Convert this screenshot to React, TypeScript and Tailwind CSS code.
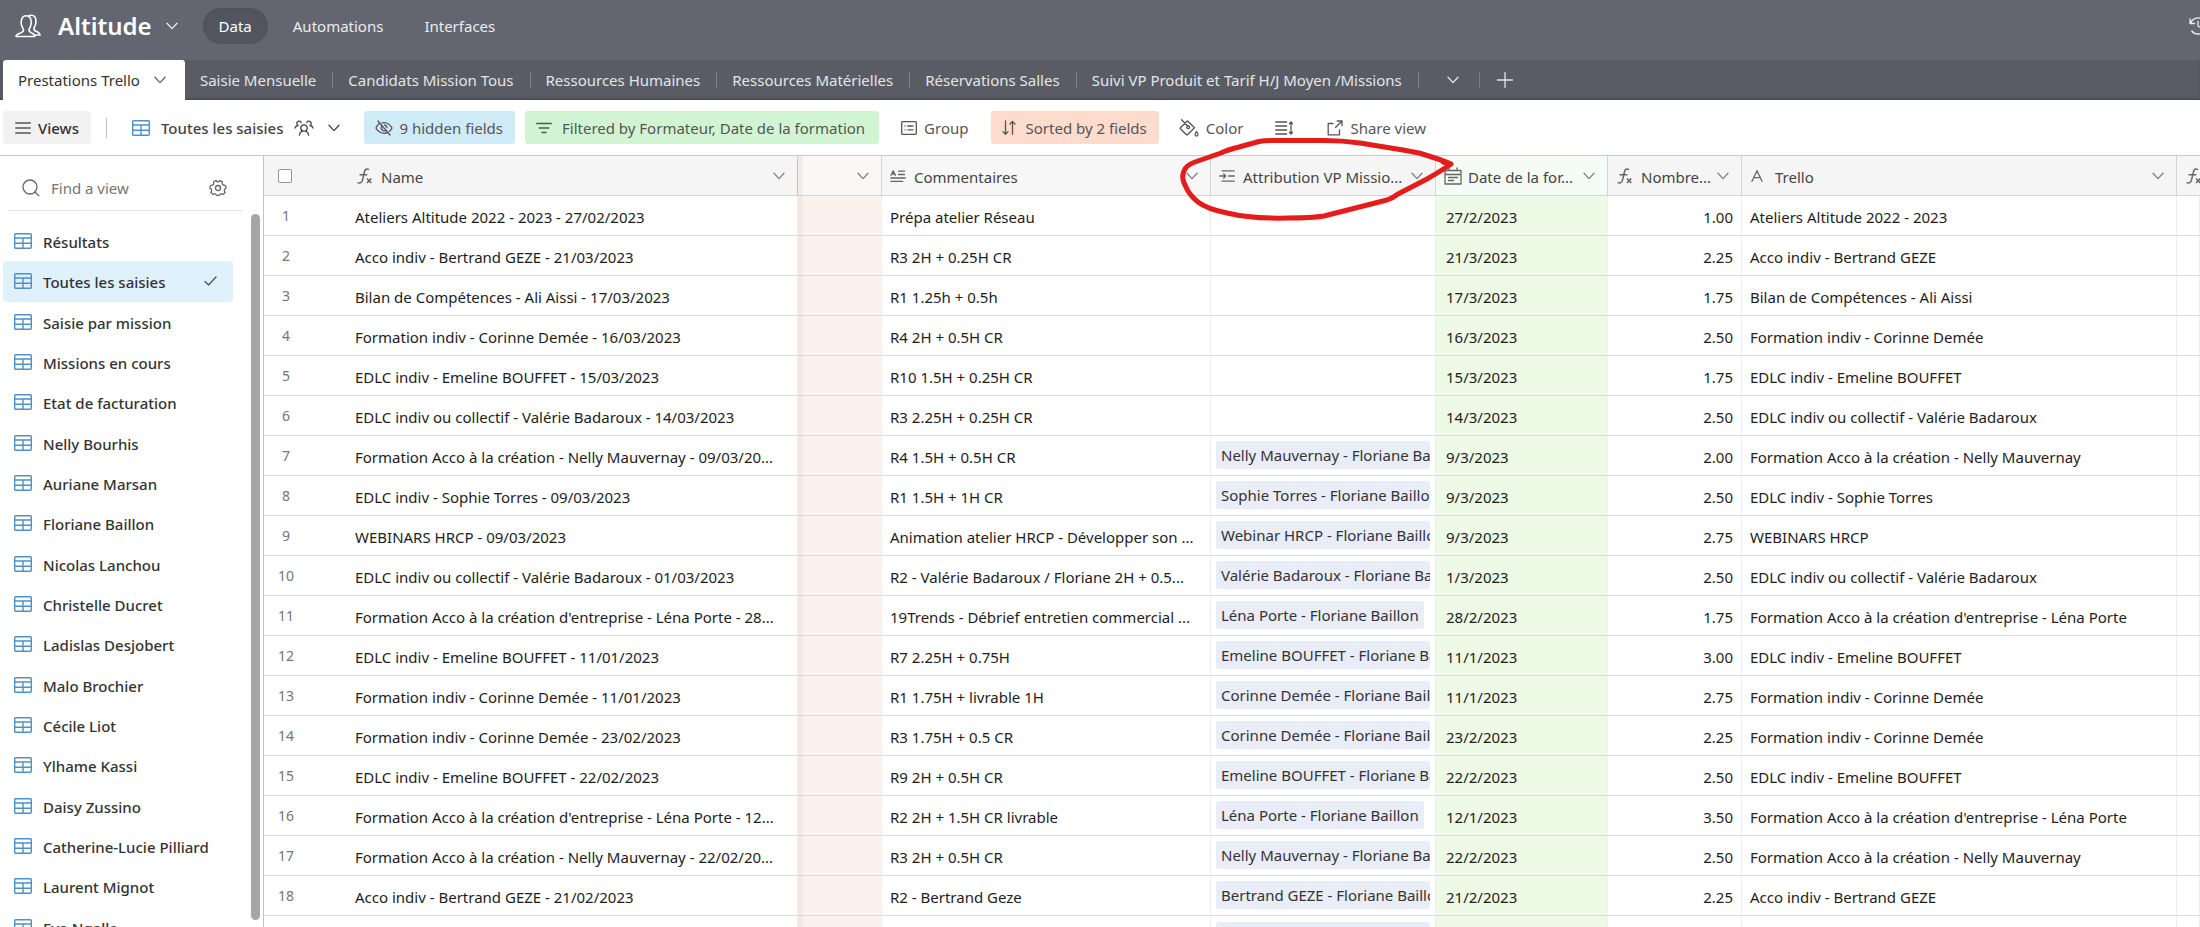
import type { ReactNode } from "react";

type IconProps = { className?: string };

function Svg({ className, children, box = "0 0 20 20" }: { className?: string; children: ReactNode; box?: string }) {
  return (
    <svg
      viewBox={box}
      className={className ?? "size-5"}
      fill="none"
      stroke="currentColor"
      strokeWidth="1.3"
      strokeLinecap="round"
      strokeLinejoin="round"
      aria-hidden="true"
    >
      {children}
    </svg>
  );
}

function Chevron({ className = "w-3 h-2" }: IconProps) {
  return (
    <Svg className={className + " shrink-0"} box="0 0 12 8">
      <path d="M1 1.200 6 6.600 11 1.200" />
    </Svg>
  );
}

function GridIcon({ className = "" }: IconProps) {
  return (
    <svg viewBox="0 0 18 16" className={"w-[18px] h-4 shrink-0 text-[#4f90c6] " + className} fill="none" stroke="currentColor" strokeWidth="1.4" aria-hidden="true">
      <rect x=".7" y=".7" width="16.6" height="14.6" rx="1" />
      <path d="M.7 5h16.6M.7 10.200h16.6M9 5v10.300" />
    </svg>
  );
}

function UsersIcon() {
  return (
    <svg viewBox="0 0 26 24" className="w-[26px] h-6 shrink-0 text-white" fill="none" stroke="currentColor" strokeWidth="1.6" strokeLinejoin="round" aria-hidden="true">
      <path d="M1 22.500h18.800c0-2.200-1.300-2.900-3.100-3.600-1.900-.7-3-1.300-2.700-3.200.3-1.500 2.300-3 2.300-7.100 0-4.600-2-6.900-5.100-6.900S6.100 4 6.100 8.600c0 4.100 2 5.600 2.300 7.100.3 1.900-.8 2.500-2.700 3.200C3.600 19.600 1.300 20.300 1 22.500Z" />
      <path d="M13.400 2.200c.9-.7 2-1 3-1 3 0 4.600 2.200 4.600 6.600 0 3.900-1.900 5.200-2.100 6.700-.2 1.800.9 2.400 2.700 3.100 1.700.6 3.100 1.400 3.400 3.400h-5.600" />
    </svg>
  );
}

function PeopleIcon() {
  return (
    <Svg className="w-5 h-4 shrink-0" box="0 0 20 16">
      <circle cx="10" cy="8" r="3.200" />
      <path d="M5.300 15.200c.4-2 1.400-3.300 2.900-4M14.700 15.200c-.4-2-1.400-3.300-2.900-4M1 8c.4-1.500 1.500-2.300 3-2.500M7.200 2.600A2.300 2.300 0 1 0 4 5.500M19 8c-.4-1.500-1.500-2.300-3-2.500M12.800 2.600A2.300 2.300 0 1 1 16 5.500" />
    </Svg>
  );
}

function EyeOffIcon() {
  return (
    <Svg className="w-[18px] h-4 shrink-0" box="0 0 18 16">
      <path d="M3 1l12 14M4.600 3.300C2.200 4.900 1 8 1 8s2.300 5.300 8 5.300c1.500 0 2.800-.3 3.900-.9M7.200 2.800C7.800 2.700 8.400 2.700 9 2.700c5.700 0 8 5.300 8 5.300s-.8 1.900-2.700 3.400M7 5.800a3 3 0 0 0 4 4.400M9.600 5c1.300.3 2.200 1.200 2.400 2.600" />
    </Svg>
  );
}

function FilterIcon() {
  return (
    <Svg className="w-4 h-3 shrink-0" box="0 0 16 12">
      <path d="M.7 1.500h14.600M3.200 6h9.600M6 10.500h4" />
    </Svg>
  );
}

function GroupIcon() {
  return (
    <Svg className="w-4 h-[14px] shrink-0" box="0 0 16 14">
      <rect x=".7" y=".7" width="14.600" height="12.600" rx=".8" />
      <path d="M4 5h.2M6.800 5H12M4 8.800h.2M6.800 8.800H12" />
    </Svg>
  );
}

function SortIcon() {
  return (
    <Svg className="w-[14px] h-4 shrink-0" box="0 0 14 16">
      <path d="M3.500 1v13M1 11.600 3.500 14.200 6 11.600M10.500 14.200V1.400M8 4l2.500-2.600L13 4" />
    </Svg>
  );
}

function ColorIcon() {
  return (
    <Svg className="w-5 h-[18px] shrink-0" box="0 0 20 18">
      <path d="M2.500.8 9 7.300M7.900 2.200 1.400 8.700a.8.8 0 0 0 0 1.100l6 6a.8.8 0 0 0 1.100 0l7-7L8.900 2.200a.7.7 0 0 0-1 0Z" />
      <circle cx="9.200" cy="8.300" r="1.400" />
      <path d="M17.500 12.500c1 1.500 1.500 2.200 1.500 3a1.500 1.500 0 0 1-3 0c0-.8.500-1.500 1.500-3Z" />
    </Svg>
  );
}

function HeightIcon() {
  return (
    <Svg className="w-[18px] h-[14px] shrink-0" box="0 0 18 14">
      <path d="M.7 1h11M.7 5h11M.7 9h11M.7 13h11M16 1.200v11.600M14.500 2.700 16 1l1.500 1.700M14.500 11.300 16 13l1.500-1.700" />
    </Svg>
  );
}

function ShareIcon() {
  return (
    <Svg className="size-4 shrink-0" box="0 0 16 16">
      <path d="M6 3.500H1.200v11.300h11.300V10M10.200 1h4.800v4.800M15 1 8.500 7.500" />
    </Svg>
  );
}

function GearIcon() {
  return (
    <Svg className="size-[18px] shrink-0" box="0 0 18 18">
      <circle cx="9" cy="9" r="2.500" />
      <path d="M6.900 1.500Q9 4.300 11.100 1.500l2.300 1.300Q12.400 6 15.900 6.300q1.600 1.300.9 3-2.700 1.700-.6 4.100l-2.300 2q-2.300-1.500-3.400.9H7.500q-1.200-2.400-3.400-.9l-2.300-2q2-2.400-.6-4.100-.7-1.700.9-3Q5.600 6 4.600 2.800Z" />
    </Svg>
  );
}

function FormulaIcon() {
  return (
    <svg viewBox="0 0 15 16" className="w-[15px] h-4 shrink-0" fill="none" stroke="currentColor" strokeWidth="1.5" aria-hidden="true">
      <path d="M12 1.700C9.800.4 8.100 1 7.500 3.600L5.500 12.200C4.900 14.600 3.200 15.400.5 14.600M2.500 6.800h7.800M10 10.500l4.300 4.600M14.300 10.500 10 15.100" />
    </svg>
  );
}

function LongTextIcon() {
  return (
    <Svg className="w-4 h-3 shrink-0" box="0 0 16 12">
      <path d="M1 5.300 3.200.8l2.200 4.500M1.700 4h3M8.500 1.200h6M8.500 4.500h6M.8 8h14.400M.8 11.300h12" />
    </Svg>
  );
}

function LookupIcon() {
  return (
    <Svg className="w-4 h-3 shrink-0" box="0 0 16 12">
      <path d="M3 .8h12.300M9.500 6h5.800M3 11.200h12.300M.7 6h6M4.700 4l2 2-2 2" />
    </Svg>
  );
}

function DateIcon() {
  return (
    <Svg className="w-[18px] h-[18px] shrink-0" box="0 0 18 18">
      <path d="M1 3.500h16v13.500H1ZM1 7.500h16M5 .9v2.600M13 .9v2.600M4.500 10.500h9M4.500 13.500h5" />
    </Svg>
  );
}

function TextIcon() {
  return (
    <Svg className="size-3 shrink-0" box="0 0 12 12">
      <path d="M1 11.300 6 .7l5 10.600M2.700 7.600h6.600" />
    </Svg>
  );
}

const tables = [
  "Saisie Mensuelle",
  "Candidats Mission Tous",
  "Ressources Humaines",
  "Ressources Matérielles",
  "Réservations Salles",
  "Suivi VP Produit et Tarif H/J Moyen /Missions",
];

const views = [
  "Résultats",
  "Toutes les saisies",
  "Saisie par mission",
  "Missions en cours",
  "Etat de facturation",
  "Nelly Bourhis",
  "Auriane Marsan",
  "Floriane Baillon",
  "Nicolas Lanchou",
  "Christelle Ducret",
  "Ladislas Desjobert",
  "Malo Brochier",
  "Cécile Liot",
  "Ylhame Kassi",
  "Daisy Zussino",
  "Catherine-Lucie Pilliard",
  "Laurent Mignot",
  "Eva Ngalle",
];

// name, comment, assignment, date, hours, trello card
const rows = [
  ["Ateliers Altitude 2022 - 2023 - 27/02/2023", "Prépa atelier Réseau", "", "27/2/2023", "1.00", "Ateliers Altitude 2022 - 2023"],
  ["Acco indiv - Bertrand GEZE - 21/03/2023", "R3 2H + 0.25H CR", "", "21/3/2023", "2.25", "Acco indiv - Bertrand GEZE"],
  ["Bilan de Compétences - Ali Aissi - 17/03/2023", "R1 1.25h + 0.5h", "", "17/3/2023", "1.75", "Bilan de Compétences - Ali Aissi"],
  ["Formation indiv - Corinne Demée - 16/03/2023", "R4 2H + 0.5H CR", "", "16/3/2023", "2.50", "Formation indiv - Corinne Demée"],
  ["EDLC indiv - Emeline BOUFFET - 15/03/2023", "R10 1.5H + 0.25H CR", "", "15/3/2023", "1.75", "EDLC indiv - Emeline BOUFFET"],
  ["EDLC indiv ou collectif - Valérie Badaroux - 14/03/2023", "R3 2.25H + 0.25H CR", "", "14/3/2023", "2.50", "EDLC indiv ou collectif - Valérie Badaroux"],
  ["Formation Acco à la création - Nelly Mauvernay - 09/03/20...", "R4 1.5H + 0.5H CR", "Nelly Mauvernay - Floriane Baillon", "9/3/2023", "2.00", "Formation Acco à la création - Nelly Mauvernay"],
  ["EDLC indiv - Sophie Torres - 09/03/2023", "R1 1.5H + 1H CR", "Sophie Torres - Floriane Baillon", "9/3/2023", "2.50", "EDLC indiv - Sophie Torres"],
  ["WEBINARS HRCP - 09/03/2023", "Animation atelier HRCP - Développer son ...", "Webinar HRCP - Floriane Baillon", "9/3/2023", "2.75", "WEBINARS HRCP"],
  ["EDLC indiv ou collectif - Valérie Badaroux - 01/03/2023", "R2 - Valérie Badaroux / Floriane 2H + 0.5...", "Valérie Badaroux - Floriane Baillon", "1/3/2023", "2.50", "EDLC indiv ou collectif - Valérie Badaroux"],
  ["Formation Acco à la création d'entreprise - Léna Porte - 28...", "19Trends - Débrief entretien commercial ...", "Léna Porte - Floriane Baillon", "28/2/2023", "1.75", "Formation Acco à la création d'entreprise - Léna Porte"],
  ["EDLC indiv - Emeline BOUFFET - 11/01/2023", "R7 2.25H + 0.75H", "Emeline BOUFFET - Floriane Baillon", "11/1/2023", "3.00", "EDLC indiv - Emeline BOUFFET"],
  ["Formation indiv - Corinne Demée - 11/01/2023", "R1 1.75H + livrable 1H", "Corinne Demée - Floriane Baillon", "11/1/2023", "2.75", "Formation indiv - Corinne Demée"],
  ["Formation indiv - Corinne Demée - 23/02/2023", "R3 1.75H + 0.5 CR", "Corinne Demée - Floriane Baillon", "23/2/2023", "2.25", "Formation indiv - Corinne Demée"],
  ["EDLC indiv - Emeline BOUFFET - 22/02/2023", "R9 2H + 0.5H CR", "Emeline BOUFFET - Floriane Baillon", "22/2/2023", "2.50", "EDLC indiv - Emeline BOUFFET"],
  ["Formation Acco à la création d'entreprise - Léna Porte - 12...", "R2 2H + 1.5H CR livrable", "Léna Porte - Floriane Baillon", "12/1/2023", "3.50", "Formation Acco à la création d'entreprise - Léna Porte"],
  ["Formation Acco à la création - Nelly Mauvernay - 22/02/20...", "R3 2H + 0.5H CR", "Nelly Mauvernay - Floriane Baillon", "22/2/2023", "2.50", "Formation Acco à la création - Nelly Mauvernay"],
  ["Acco indiv - Bertrand GEZE - 21/02/2023", "R2 - Bertrand Geze", "Bertrand GEZE - Floriane Baillon", "21/2/2023", "2.25", "Acco indiv - Bertrand GEZE"],
];

function TopBar() {
  return (
    <header className="flex h-[60px] items-start bg-[#636670] text-[#ececee]">
      <div className="flex h-[52px] flex-1 items-center pl-[15px]">
        <UsersIcon />
        <button className="ml-[17px] flex items-center gap-[14px]">
          <h1 className="text-[24px] leading-8 font-semibold text-white">Altitude</h1>
          <Chevron />
        </button>
        <nav className="ml-[25px] flex items-center gap-[9px] text-[15px] leading-5">
          <button className="h-9 rounded-full bg-[#525560] px-4 text-white shadow-inner">Data</button>
          <button className="h-9 px-4">Automations</button>
          <button className="h-9 px-4">Interfaces</button>
        </nav>
      </div>
      <button aria-label="History" className="mt-4 -mr-2 shrink-0">
        <Svg className="size-5">
          <path d="M2 3v4.500h4.500M2.500 7.300A8 8 0 1 1 3.800 15M10 5.500V10l3 2" />
        </Svg>
      </button>
    </header>
  );
}

function TableTabs() {
  return (
    <nav className="flex h-10 items-stretch bg-[#595c65] pl-[3px] text-[15px] leading-5 whitespace-nowrap text-[#e4e5e7] shadow-[inset_0_-2px_3px_-1px_#43454d]">
      <button className="flex items-center gap-[14px] rounded-t-[3px] bg-white pr-[19px] pl-[15px] text-[#333333]">
        Prestations Trello
        <Chevron className="w-3 h-2 text-[#666666]" />
      </button>
      {tables.map((name) => (
        <div key={name} className="flex items-center">
          <button className="h-full pr-4 pl-[15px]">{name}</button>
          <span className="h-4 w-px bg-[#7b7e86]" />
        </div>
      ))}
      <button aria-label="All tables" className="pr-5 pl-7">
        <Chevron />
      </button>
      <span className="h-4 w-px self-center bg-[#7b7e86]" />
      <button aria-label="Add table" className="px-4">
        <Svg className="size-[18px]" box="0 0 18 18">
          <path d="M9 1.500v15M1.500 9h15" />
        </Svg>
      </button>
    </nav>
  );
}

function Toolbar() {
  return (
    <div className="flex h-[56px] items-center border-b border-[#c6c9cb] pl-[3px] text-[15px] leading-5 whitespace-nowrap text-[#555555]">
      <button className="flex h-[33px] items-center gap-[7px] rounded-[3px] bg-[#f2f2f2] px-3 font-medium text-[#333333]">
        <Svg className="w-4 h-3 text-[#555555]" box="0 0 16 12">
          <path d="M.7 1h14.600M.7 6h14.600M.7 11h14.600" />
        </Svg>
        Views
      </button>
      <span className="ml-[15px] h-5 w-px bg-[#bfbfbf]" />
      <button className="ml-[25px] flex items-center font-medium text-[#444444]">
        <GridIcon />
        <span className="mr-[10px] ml-[11px]">Toutes les saisies</span>
        <PeopleIcon />
        <Chevron className="w-3 h-2 ml-[14px]" />
      </button>
      <div className="ml-6 flex items-center gap-[10px]">
        <button className="flex h-[33px] items-center gap-[7px] rounded-[3px] bg-[#d0ebf8] pr-3 pl-[11px]">
          <EyeOffIcon />9 hidden fields
        </button>
        <button className="flex h-[33px] items-center gap-[10px] rounded-[3px] bg-[#d1f5d3] pr-[14px] pl-[11px]">
          <FilterIcon />
          Filtered by Formateur, Date de la formation
        </button>
        <button className="flex h-[33px] items-center gap-[7px] pr-3 pl-3">
          <GroupIcon />
          Group
        </button>
        <button className="flex h-[33px] items-center gap-[10px] rounded-[3px] bg-[#fddbcd] pr-3 pl-[11px]">
          <SortIcon />
          Sorted by 2 fields
        </button>
        <button className="flex h-[33px] items-center gap-[7px] pr-3 pl-[10px]">
          <ColorIcon />
          Color
        </button>
        <button aria-label="Row height" className="flex h-[33px] items-center pr-3 pl-[10px]">
          <HeightIcon />
        </button>
        <button className="flex h-[33px] items-center gap-[7px] px-3">
          <ShareIcon />
          Share view
        </button>
      </div>
    </div>
  );
}

function Sidebar() {
  return (
    <aside className="flex w-[263px] shrink-0 text-[#333333]">
      <div className="min-w-0 flex-1">
        <div className="mr-2 ml-2 flex h-[55px] items-center border-b border-[#e2e2e2] pt-[10px] pr-4 pl-[14px] text-[#666666]">
          <Svg className="size-[18px] shrink-0" box="0 0 18 18">
            <circle cx="8" cy="8" r="7" />
            <path d="m13 13 3.800 3.800" />
          </Svg>
          <input
            aria-label="Find a view"
            placeholder="Find a view"
            className="mr-2 ml-[11px] min-w-0 flex-1 text-[15px] leading-5 outline-none placeholder:text-[#757575]"
          />
          <button aria-label="View settings">
            <GearIcon />
          </button>
        </div>
        <ul className="mt-[10px] mr-[18px] ml-[3px] grid h-[726px] auto-rows-fr">
          {views.map((view) => {
            const active = view === "Toutes les saisies";
            return (
              <li key={view}>
                <button
                  className={
                    "flex h-full w-full items-center rounded-[3px] pr-4 pl-[11px] text-[15px] leading-5 font-medium " +
                    (active ? "bg-[#dff1fb]" : "")
                  }
                >
                  <GridIcon />
                  <span className="ml-[11px] flex-1 pt-0.5 text-left whitespace-nowrap">{view}</span>
                  {active && (
                    <Svg className="w-[13px] h-[10px] text-[#555555]" box="0 0 13 10">
                      <path d="m1 5.500 3.500 3.500L12 1" />
                    </Svg>
                  )}
                </button>
              </li>
            );
          })}
        </ul>
      </div>
      <div className="mt-[58px] mr-[3px] h-[706px] w-[9px] rounded-full bg-[#a6a6a6]" />
    </aside>
  );
}

function FieldHead({ icon, label, className = "" }: { icon?: ReactNode; label?: string; className?: string }) {
  return (
    <th className={"h-[40px] border-r border-b border-[#d3d6d8] px-[9px] font-normal " + className}>
      <div className="flex items-center text-[#666666]">
        <span className="flex w-6 shrink-0 items-center">{icon}</span>
        <span className="flex-1 pt-0.5 text-left whitespace-nowrap text-[#444444]">{label}</span>
        <Chevron className="w-3 h-2 text-[#808080]" />
      </div>
    </th>
  );
}

function Cell({ children, className = "" }: { children?: ReactNode; className?: string }) {
  return (
    <td className={"h-[40px] truncate border-b border-b-[#dcdcdc] border-r border-r-[#eeeeee] px-2 pt-0.5 " + className}>{children}</td>
  );
}

function Records() {
  return (
    <table className="w-full table-fixed border-separate border-spacing-0 text-[15px] leading-5 text-[#1d1d1d]">
      <colgroup>
        <col className="w-[82px]" />
        <col className="w-[452px]" />
        <col className="w-[84px]" />
        <col className="w-[329px]" />
        <col className="w-[225px]" />
        <col className="w-[172px]" />
        <col className="w-[134px]" />
        <col className="w-[435px]" />
        <col />
      </colgroup>
      <thead>
        <tr className="bg-[#f5f5f5]">
          <th className="border-b border-[#d3d6d8]">
            <input
              type="checkbox"
              aria-label="Select all rows"
              className="ml-[14px] block size-[14px] appearance-none rounded-[2px] border border-[#8f959b] bg-white"
            />
          </th>
          <FieldHead icon={<FormulaIcon />} label="Name" className="border-r-[#c4c4c4] pr-3 pl-[11px]" />
          <FieldHead className="bg-[#fbf7f6] pr-3 shadow-[inset_5px_0_0_#f1ecea]" />
          <FieldHead icon={<LongTextIcon />} label="Commentaires" className="bg-[#f7f7f7] pr-3 pl-2" />
          <FieldHead icon={<LookupIcon />} label="Attribution VP Missio..." className="pr-3 pl-2" />
          <FieldHead icon={<DateIcon />} label="Date de la for..." className="bg-[#f5fbf5] pr-3 pl-2" />
          <FieldHead icon={<FormulaIcon />} label="Nombre..." className="pr-3" />
          <FieldHead icon={<TextIcon />} label="Trello" className="pr-3" />
          <th className="overflow-hidden border-b border-[#d3d6d8] pl-[9px] text-[#666666]">
            <FormulaIcon />
          </th>
        </tr>
      </thead>
      <tbody>
        {rows.map(([name, comment, owner, date, hours, trello], i) => (
          <tr key={i}>
            <td className="border-b border-[#dcdcdc] pr-[38px] text-center text-[14px] text-[#757575]">{i + 1}</td>
            <Cell className="border-r-[#c4c4c4] pl-[9px]">{name}</Cell>
            <Cell className="bg-[#fcf2ed] shadow-[inset_5px_0_0_#f3e8e4]" />
            <Cell>{comment}</Cell>
            <td className="border-r border-b border-r-[#eeeeee] border-b-[#dcdcdc] pr-[5px] pl-[5px]">
              {owner && (
                <div className="mb-px w-fit max-w-full overflow-hidden rounded-[3px] bg-[#e9edf8] px-[5px] leading-7 whitespace-nowrap text-[#333333]">
                  {owner}
                </div>
              )}
            </td>
            <Cell className="bg-[#edfae5] pl-[10px]">{date}</Cell>
            <Cell className="text-right">{hours}</Cell>
            <Cell>{trello}</Cell>
            <Cell />
          </tr>
        ))}
        <tr>
          <td />
          <Cell className="border-r-[#c4c4c4]" />
          <Cell className="bg-[#fcf2ed] shadow-[inset_5px_0_0_#f3e8e4]" />
          <Cell />
          <td className="border-r border-[#eeeeee] px-[5px]">
            <div className="mb-px h-7 rounded-[3px] bg-[#e9edf8]" />
          </td>
          <Cell className="bg-[#edfae5]" />
          <Cell />
          <Cell />
          <Cell />
        </tr>
      </tbody>
    </table>
  );
}

// Hand-drawn loop around the "Attribution VP Missions" field
function RedLoop() {
  return (
    <svg
      viewBox="0 0 280 90"
      className="pointer-events-none absolute top-[135px] left-[1177px] h-[90px] w-[280px]"
      fill="none"
      stroke="#e61c1c"
      strokeWidth="5"
      strokeLinecap="round"
      strokeLinejoin="round"
      aria-hidden="true"
    >
      <path d="M272 28C262 24 252 21 242 18L226 15 183 8Q165 5.500 147 5.500H98Q88 5.500 82 6.500L62 12Q50 15 44 18L18 27Q9 30 7 36 4 43 8 50 12 60 21 67 30 74 50 78 75 84 112 83 135 83 147 81L210 65Q216 63 221 59L250 44Q264 36 274 29L266 27" />
    </svg>
  );
}

export default function App() {
  return (
    <div className="relative flex h-screen flex-col overflow-hidden bg-white font-['Noto_Sans','Open_Sans',sans-serif]">
      <TopBar />
      <TableTabs />
      <Toolbar />
      <div className="flex min-h-0 flex-1">
        <Sidebar />
        <main className="min-w-0 flex-1 overflow-hidden border-l border-[#c4c4c4]">
          <Records />
        </main>
      </div>
      <RedLoop />
    </div>
  );
}
